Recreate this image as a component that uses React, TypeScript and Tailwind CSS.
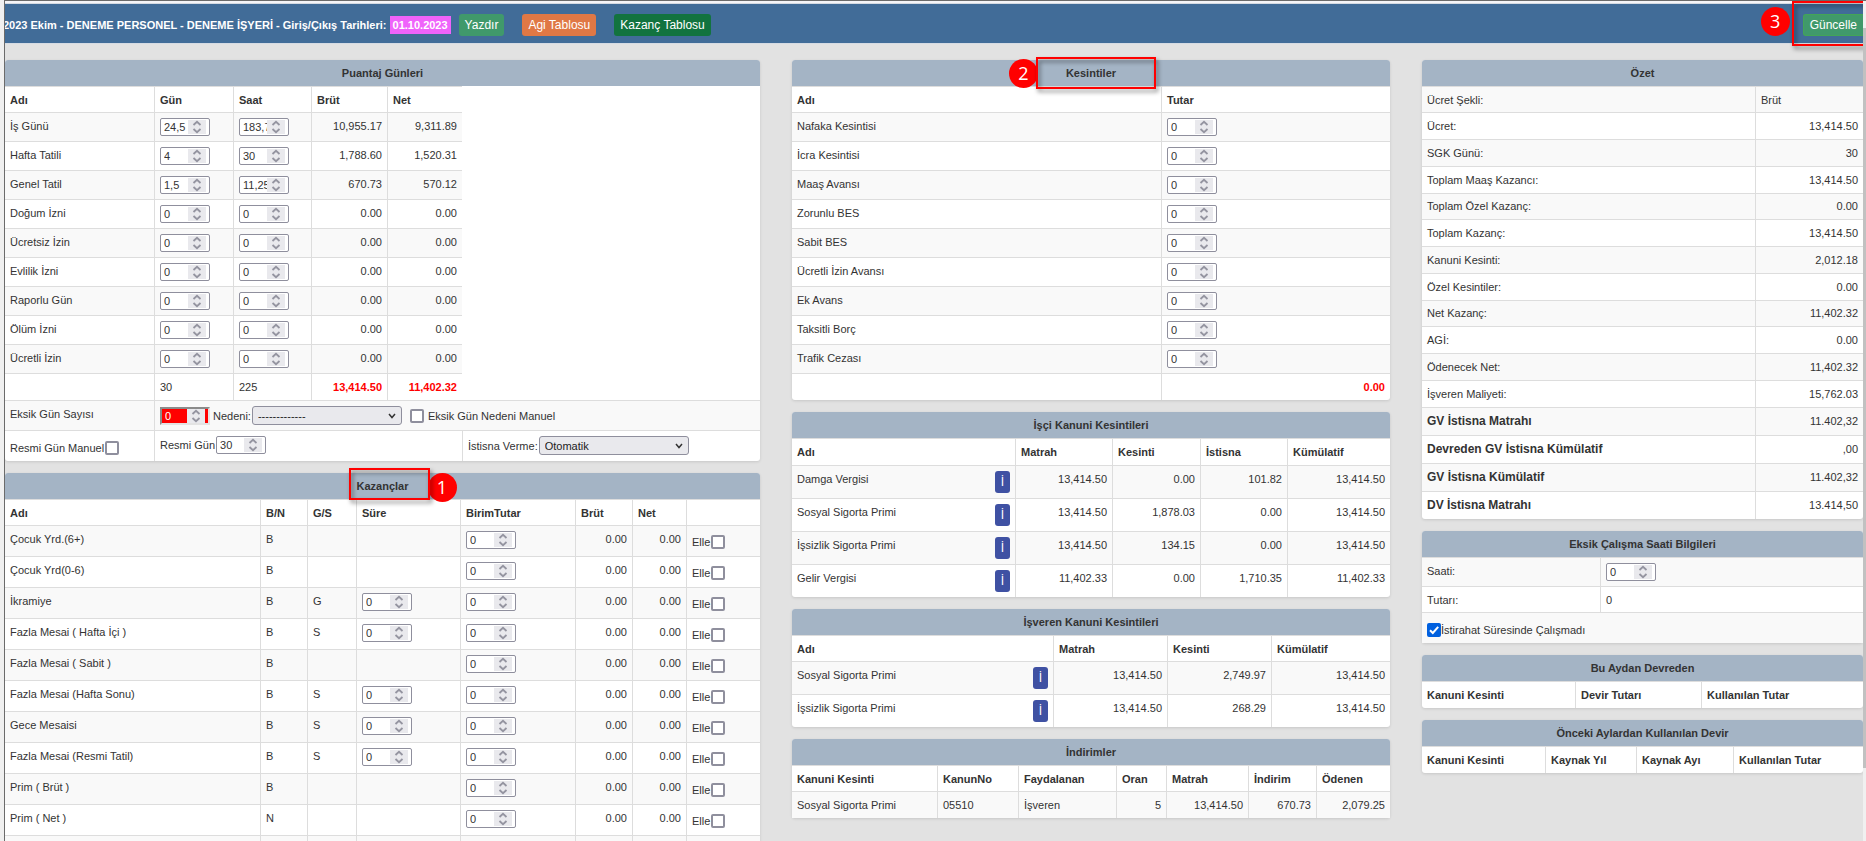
import type { ReactNode } from 'react';
import clsx from 'clsx';

interface SpinProps {
  label: string;
  value?: string;
  danger?: boolean;
}

const Spin = ({ label, value = '0', danger = false }: SpinProps) => (
  <span
    className={clsx(
      'inline-flex w-[50px] h-[18px] pr-[3px] items-center align-top',
      danger
        ? 'bg-[#ff0000] text-white border-2 border-t-[#8b8b8b] border-l-[#8b8b8b] border-b-[#e3e3e3] border-r-[#e3e3e3]'
        : 'bg-white text-[#333] border border-[#8f8f9d] rounded-[2px]',
    )}
  >
    <input
      type="text"
      inputMode="decimal"
      aria-label={label}
      defaultValue={value}
      className="min-w-0 flex-1 h-full pl-[3px] bg-transparent text-[11px] outline-none"
    />
    <svg
      viewBox="0 0 18 14"
      className="w-[18px] h-[14px] shrink-0 bg-[#e9e9ed]"
      fill="none"
      stroke="#9494a0"
      strokeWidth="1.8"
    >
      <path d="M5.5 5 L9 1.8 L12.5 5 M5.5 9 L9 12.2 L12.5 9" />
    </svg>
  </span>
);

interface DropdownProps {
  id: string;
  option: string;
}

const Dropdown = ({ id, option }: DropdownProps) => (
  <span className="relative inline-flex w-[150px] h-[19px]">
    <select
      id={id}
      className="w-full h-full pl-[5px] pr-5 appearance-none bg-[#e9e9ed] border border-[#8f8f9d] rounded-[3px] text-[11px] text-[#222]"
    >
      <option>{option}</option>
    </select>
    <svg
      viewBox="0 0 8 6"
      className="absolute right-[6px] top-[7px] w-2 h-[6px] pointer-events-none"
      fill="none"
      stroke="#333"
      strokeWidth="1.5"
    >
      <path d="M1 1 L4 4.5 L7 1" />
    </svg>
  </span>
);

const Check = ({ id, checked = false }: { id: string; checked?: boolean }) => (
  <span className="relative inline-flex size-[14px] shrink-0">
    <input
      id={id}
      type="checkbox"
      defaultChecked={checked}
      className="peer size-full appearance-none bg-white border-2 border-[#8f8f9d] rounded-[2px] checked:bg-[#0060df] checked:border-[#0060df]"
    />
    <svg
      viewBox="0 0 14 14"
      className="absolute inset-0 hidden peer-checked:block pointer-events-none"
      fill="none"
      stroke="#fff"
      strokeWidth="2"
    >
      <path d="M3 7.2 L5.8 10 L11.2 3.8" />
    </svg>
  </span>
);

const Badge = ({ n, className }: { n: number; className?: string }) => (
  <span
    className={clsx(
      'size-[29px] rounded-full bg-[#ff0000] text-white text-lg leading-[29px] font-normal text-center font-["Open_Sans",sans-serif]',
      className,
    )}
  >
    {n}
  </span>
);

const Frame = ({ className }: { className: string }) => (
  <span
    className={clsx(
      'absolute border-2 border-[#ff0000] drop-shadow-[2px_3px_2px_rgba(0,0,0,0.5)] pointer-events-none',
      className,
    )}
  />
);

interface CardProps {
  title: ReactNode;
  cols: number[];
  head?: string[];
  tall?: boolean;
  children?: ReactNode;
}

const Card = ({ title, cols, head, tall = false, children }: CardProps) => (
  <section className="bg-white rounded-[3px] shadow-[0_1px_3px_rgba(0,0,0,0.12)]">
    <h2 className="h-[26px] leading-[26px] text-center font-bold bg-[#a4b4c5] rounded-t-[3px]">
      {title}
    </h2>
    <table className="w-full table-fixed border-separate border-spacing-0 text-left [&_td]:p-[5px] [&_td]:align-top [&_td]:border-t [&_td]:border-[#ddd] [&_th]:p-[5px] [&_th]:border-t [&_th]:border-[#ddd] [&_tr>*+*]:border-l [&_tbody_tr:nth-child(odd)>td]:bg-[#f9f9f9]">
      <colgroup>
        {cols.map((width, i) => (
          <col key={i} style={{ width }} />
        ))}
      </colgroup>
      {head && (
        <thead>
          <tr>
            {head.map((text, i) => (
              <th key={i} className={clsx('whitespace-nowrap', !tall && 'pb-1!')}>
                {text}
              </th>
            ))}
          </tr>
        </thead>
      )}
      <tbody>{children}</tbody>
    </table>
  </section>
);

const Num = ({ children }: { children: ReactNode }) => (
  <td className="text-right">{children}</td>
);

const days = [
  ['İş Günü', '24,5', '183,75', '10,955.17', '9,311.89'],
  ['Hafta Tatili', '4', '30', '1,788.60', '1,520.31'],
  ['Genel Tatil', '1,5', '11,25', '670.73', '570.12'],
  ['Doğum İzni', '0', '0', '0.00', '0.00'],
  ['Ücretsiz İzin', '0', '0', '0.00', '0.00'],
  ['Evlilik İzni', '0', '0', '0.00', '0.00'],
  ['Raporlu Gün', '0', '0', '0.00', '0.00'],
  ['Ölüm İzni', '0', '0', '0.00', '0.00'],
  ['Ücretli İzin', '0', '0', '0.00', '0.00'],
];

const earnings = [
  ['Çocuk Yrd.(6+)', 'B', '', '0.00'],
  ['Çocuk Yrd(0-6)', 'B', '', '0.00'],
  ['İkramiye', 'B', 'G', '0.00'],
  ['Fazla Mesai ( Hafta İçi )', 'B', 'S', '0.00'],
  ['Fazla Mesai ( Sabit )', 'B', '', '0.00'],
  ['Fazla Mesai (Hafta Sonu)', 'B', 'S', '0.00'],
  ['Gece Mesaisi', 'B', 'S', '0.00'],
  ['Fazla Mesai (Resmi Tatil)', 'B', 'S', '0.00'],
  ['Prim ( Brüt )', 'B', '', '0.00'],
  ['Prim ( Net )', 'N', '', '0.00'],
  ['', '', '', ''],
];

const deductions = [
  'Nafaka Kesintisi',
  'İcra Kesintisi',
  'Maaş Avansı',
  'Zorunlu BES',
  'Sabit BES',
  'Ücretli İzin Avansı',
  'Ek Avans',
  'Taksitli Borç',
  'Trafik Cezası',
];

const workerLegal = [
  ['Damga Vergisi', '13,414.50', '0.00', '101.82', '13,414.50'],
  ['Sosyal Sigorta Primi', '13,414.50', '1,878.03', '0.00', '13,414.50'],
  ['İşsizlik Sigorta Primi', '13,414.50', '134.15', '0.00', '13,414.50'],
  ['Gelir Vergisi', '11,402.33', '0.00', '1,710.35', '11,402.33'],
];

const employerLegal = [
  ['Sosyal Sigorta Primi', '13,414.50', '2,749.97', '13,414.50'],
  ['İşsizlik Sigorta Primi', '13,414.50', '268.29', '13,414.50'],
];

const summary = [
  ['Ücret:', '13,414.50'],
  ['SGK Günü:', '30'],
  ['Toplam Maaş Kazancı:', '13,414.50'],
  ['Toplam Özel Kazanç:', '0.00'],
  ['Toplam Kazanç:', '13,414.50'],
  ['Kanuni Kesinti:', '2,012.18'],
  ['Özel Kesintiler:', '0.00'],
  ['Net Kazanç:', '11,402.32'],
  ['AGİ:', '0.00'],
  ['Ödenecek Net:', '11,402.32'],
  ['İşveren Maliyeti:', '15,762.03'],
];

const exemptions = [
  ['GV İstisna Matrahı', '11.402,32'],
  ['Devreden GV İstisna Kümülatif', ',00'],
  ['GV İstisna Kümülatif', '11.402,32'],
  ['DV İstisna Matrahı', '13.414,50'],
];

const LegalRow = ({ row }: { row: string[] }) => (
  <tr>
    <td>
      <div className="flex justify-between">
        {row[0]}
        <button
          type="button"
          className="w-[15px] h-[22px] rounded-[3px] bg-[#3f51a3] text-white text-xs leading-5"
        >
          İ
        </button>
      </div>
    </td>
    {row.slice(1).map((value, i) => (
      <Num key={i}>{value}</Num>
    ))}
  </tr>
);

const TopBar = () => (
  <header className="flex items-center h-[41px] pt-[3px] border-y border-[#d5dbe3] bg-[#416c98] text-white">
    <h1 className="-ml-[2px] font-bold whitespace-nowrap">
      2023 Ekim - DENEME PERSONEL - DENEME İŞYERİ - Giriş/Çıkış Tarihleri:{' '}
      <span className="inline-block h-[18px] px-[3px] leading-[18px] bg-[#ef63fb]">
        01.10.2023
      </span>
    </h1>
    <div className="ml-2 flex gap-[18px] text-xs">
      <button type="button" className="h-[22px] px-[6px] rounded-[3px] bg-[#40996b]">
        Yazdır
      </button>
      <button type="button" className="h-[22px] px-[6px] rounded-[3px] bg-[#e07845]">
        Agi Tablosu
      </button>
      <button type="button" className="h-[22px] px-[6px] rounded-[3px] bg-[#12733f]">
        Kazanç Tablosu
      </button>
    </div>
    <Badge n={3} className="ml-auto mr-[13px] -mt-2" />
    <div className="relative">
      <button
        type="button"
        className="block h-[22px] px-[6px] text-xs bg-[#40996b] border border-r-0 border-[#43a556] rounded-l-[3px]"
      >
        Güncelle
      </button>
      <Frame className="-left-[11px] -top-[13px] w-20 h-[45px]" />
    </div>
  </header>
);

const LeftColumn = () => (
  <div className="flex flex-col gap-3">
    <Card
      title="Puantaj Günleri"
      cols={[149, 79, 78, 76, 75, 298]}
      head={['Adı', 'Gün', 'Saat', 'Brüt', 'Net']}
    >
      {days.map(([name, day, hour, gross, net]) => (
        <tr key={name}>
          <td>{name}</td>
          <td>
            <Spin label={`${name} gün`} value={day} />
          </td>
          <td>
            <Spin label={`${name} saat`} value={hour} />
          </td>
          <Num>{gross}</Num>
          <Num>{net}</Num>
        </tr>
      ))}
      <tr>
        <td></td>
        <td>30</td>
        <td>225</td>
        <td className="text-right font-bold text-[#ff0000]">13,414.50</td>
        <td className="text-right font-bold text-[#ff0000]">11,402.32</td>
      </tr>
      <tr>
        <td>Eksik Gün Sayısı</td>
        <td colSpan={5}>
          <div className="flex items-center">
            <Spin label="Eksik Gün Sayısı" danger />
            <label htmlFor="nedeni" className="ml-[3px] mr-px">
              Nedeni:
            </label>
            <Dropdown id="nedeni" option="-------------" />
            <span className="ml-2 mr-1 flex">
              <Check id="nedenManuel" />
            </span>
            <label htmlFor="nedenManuel">Eksik Gün Nedeni Manuel</label>
          </div>
        </td>
      </tr>
      <tr>
        <td>
          <div className="flex items-center gap-px pt-1">
            <label htmlFor="resmiManuel">Resmi Gün Manuel</label>
            <Check id="resmiManuel" />
          </div>
        </td>
        <td colSpan={4}>
          <div className="flex items-center gap-px">
            Resmi Gün <Spin label="Resmi Gün" value="30" />
          </div>
        </td>
        <td>
          <div className="flex items-center gap-px">
            <label htmlFor="istisna">İstisna Verme:</label>
            <Dropdown id="istisna" option="Otomatik" />
          </div>
        </td>
      </tr>
    </Card>

    <Card
      title={
        <span className="relative inline-block">
          Kazançlar
          <Badge n={1} className="absolute left-[71px] top-0" />
          <Frame className="-left-2 -top-[5px] w-[81px] h-8" />
        </span>
      }
      cols={[255, 47, 49, 104, 115, 57, 54, 74]}
      head={['Adı', 'B/N', 'G/S', 'Süre', 'BirimTutar', 'Brüt', 'Net', '']}
    >
      {earnings.map(([name, kind, unit, total], i) => (
        <tr key={i}>
          <td>{name}</td>
          <td>{kind}</td>
          <td>{unit}</td>
          <td>{unit && <Spin label={`${name} süre`} />}</td>
          <td>
            <Spin label={`${name} birim tutar`} />
          </td>
          <Num>{total}</Num>
          <Num>{total}</Num>
          <td>
            <div className="flex items-center gap-px pt-[3px] pb-px">
              <label htmlFor={`elle${i}`}>Elle</label>
              <Check id={`elle${i}`} />
            </div>
          </td>
        </tr>
      ))}
    </Card>
  </div>
);

const MiddleColumn = () => (
  <div className="flex flex-col gap-3">
    <Card
      title={
        <span className="relative inline-block">
          Kesintiler
          <Badge n={2} className="absolute -left-[57px] -top-px" />
          <Frame className="-left-[30px] -top-[3px] w-[120px] h-8" />
        </span>
      }
      cols={[369, 229]}
      head={['Adı', 'Tutar']}
    >
      {deductions.map((name) => (
        <tr key={name}>
          <td>{name}</td>
          <td>
            <Spin label={name} />
          </td>
        </tr>
      ))}
      <tr>
        <td></td>
        <td className="text-right font-bold text-[#ff0000]">0.00</td>
      </tr>
    </Card>

    <Card
      title="İşçi Kanuni Kesintileri"
      cols={[223, 97, 88, 87, 103]}
      head={['Adı', 'Matrah', 'Kesinti', 'İstisna', 'Kümülatif']}
      tall
    >
      {workerLegal.map((row) => (
        <LegalRow key={row[0]} row={row} />
      ))}
    </Card>

    <Card
      title="İşveren Kanuni Kesintileri"
      cols={[261, 114, 104, 119]}
      head={['Adı', 'Matrah', 'Kesinti', 'Kümülatif']}
    >
      {employerLegal.map((row) => (
        <LegalRow key={row[0]} row={row} />
      ))}
    </Card>

    <Card
      title="İndirimler"
      cols={[145, 81, 98, 50, 82, 68, 74]}
      head={['Kanuni Kesinti', 'KanunNo', 'Faydalanan', 'Oran', 'Matrah', 'İndirim', 'Ödenen']}
    >
      <tr>
        <td>Sosyal Sigorta Primi</td>
        <td>05510</td>
        <td>İşveren</td>
        <Num>5</Num>
        <Num>13,414.50</Num>
        <Num>670.73</Num>
        <Num>2,079.25</Num>
      </tr>
    </Card>
  </div>
);

const RightColumn = () => (
  <div className="flex flex-col gap-3">
    <Card title="Özet" cols={[333, 108]}>
      <tr>
        <td className="pb-1!">Ücret Şekli:</td>
        <td className="pb-1!">Brüt</td>
      </tr>
      {summary.map(([name, value]) => (
        <tr key={name} className="nth-[4n+1]:leading-[15px]">
          <td>{name}</td>
          <Num>{value}</Num>
        </tr>
      ))}
      {exemptions.map(([name, value]) => (
        <tr key={name} className="leading-[17px]">
          <td className="text-xs leading-[17px] font-bold">{name}</td>
          <Num>{value}</Num>
        </tr>
      ))}
    </Card>

    <Card title="Eksik Çalışma Saati Bilgileri" cols={[178, 263]}>
      <tr>
        <td>Saati:</td>
        <td>
          <Spin label="Saati" />
        </td>
      </tr>
      <tr>
        <td className="pb-1!">Tutarı:</td>
        <td className="pb-1!">0</td>
      </tr>
      <tr>
        <td colSpan={2}>
          <div className="flex items-center pt-1">
            <Check id="istirahat" checked />
            <label htmlFor="istirahat">İstirahat Süresinde Çalışmadı</label>
          </div>
        </td>
      </tr>
    </Card>

    <Card
      title="Bu Aydan Devreden"
      cols={[153, 126, 162]}
      head={['Kanuni Kesinti', 'Devir Tutarı', 'Kullanılan Tutar']}
      tall
    />
    <Card
      title="Önceki Aylardan Kullanılan Devir"
      cols={[123, 91, 97, 130]}
      head={['Kanuni Kesinti', 'Kaynak Yıl', 'Kaynak Ayı', 'Kullanılan Tutar']}
      tall
    />
  </div>
);

const App = () => {
  return (
    <div className='flex h-screen bg-[#f0f0f0] font-["Liberation_Sans",Arial,sans-serif] text-[11px] leading-4 text-[#333]'>
      <div className="w-1 shrink-0" />
      <main className="flex-1 min-w-0 overflow-hidden border-l border-[#6b6b6b] bg-[#e2e2e2]">
        <div className="h-[3px] border-t border-[#6b6b6b] bg-[#f5f5f8]" />
        <TopBar />
        <div className="pt-4 grid grid-cols-[755fr_598fr_441fr] gap-x-8 items-start">
          <LeftColumn />
          <MiddleColumn />
          <RightColumn />
        </div>
      </main>
      <div className="w-[3px] shrink-0 pt-[27px] border-t border-[#6b6b6b]">
        <div className="h-[91%] bg-[#c1c1c1]" />
      </div>
    </div>
  );
};

export default App;
